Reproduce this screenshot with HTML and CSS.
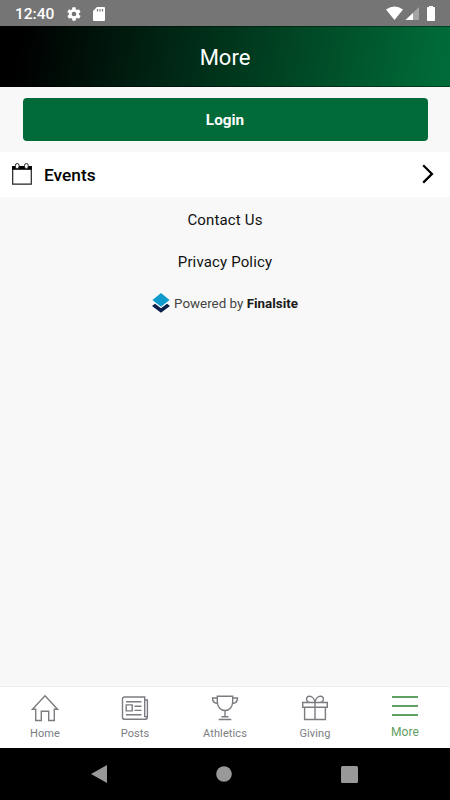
FILE: index.html
```html
<!DOCTYPE html>
<html lang="en">
<head>
    <meta charset="UTF-8">
    <meta name="viewport" content="width=device-width, initial-scale=1.0">
    <title>More</title>
    <link rel="stylesheet" href="styles.css">
</head>
<body>
    <div class="status-bar">
        <span class="clock">12:40</span>
        <svg class="gear" width="16" height="16" viewBox="0 0 24 24" fill="#fff">
            <path d="M19.4 13c0-.3.1-.6.1-1s0-.7-.1-1l2.1-1.600c.2-.2.300-.4.100-.6l-2-3.500c-.1-.2-.4-.3-.6-.2l-2.500 1c-.5-.4-1.100-.7-1.700-1l-.4-2.600c0-.3-.2-.5-.5-.5h-4c-.3 0-.5.2-.5.500l-.4 2.600c-.6.300-1.200.6-1.700 1l-2.500-1c-.2-.1-.5 0-.6.200l-2 3.500c-.1.200-.1.500.1.600L4.500 11c0 .3-.1.600-.1 1s0 .7.100 1l-2.100 1.600c-.2.200-.3.400-.1.600l2 3.500c.1.200.4.300.6.200l2.500-1c.5.4 1.100.7 1.700 1l.4 2.600c0 .3.200.5.500.5h4c.3 0 .5-.2.500-.5l.4-2.600c.6-.3 1.200-.6 1.700-1l2.500 1c.2.100.5 0 .6-.2l2-3.500c.1-.2.100-.5-.1-.6zM12 15.500a3.500 3.500 0 1 1 0-7 3.500 3.500 0 0 1 0 7z"/>
        </svg>
        <svg class="sd" width="12" height="14" viewBox="0 0 12 14">
            <path d="M4 0h7a1 1 0 0 1 1 1v12a1 1 0 0 1-1 1H1a1 1 0 0 1-1-1V4z" fill="#fff"/>
            <path d="M4.500 2v2.500M7 2v2.500M9.500 2v2.500" stroke="#757575" stroke-width="1.200"/>
        </svg>
        <svg class="signals" width="50" height="15" viewBox="0 0 50 15" fill="#fff">
            <path d="M0 3.500Q8.500 -2.500 17 3.500L8.500 14z"/>
            <path d="M33 1v13H19.500z" opacity=".35"/>
            <path d="M27 7v7h-7.500z"/>
            <path d="M43 0h4v1h1.200q.8 0 .8.800v12.400q0 .8-.8.800h-6.400q-.8 0-.8-.8V1.800q0-.8.800-.8H43z"/>
        </svg>
    </div>

    <header class="header">
        <h1>More</h1>
    </header>

    <main class="content">
        <button class="login-btn">Login</button>

        <a class="menu-row">
            <svg width="20" height="22" viewBox="0 0 20 22">
                <path d="M.7 3.500h18.600v17.700H.7z" fill="#fff" stroke="#222" stroke-width="1.200"/>
                <path d="M.2 3h19.600v3.800H.2z" fill="#000"/>
                <rect x="3.400" y=".5" width="3.600" height="5.200" rx="1.800" fill="#fff" stroke="#222" stroke-width="1"/>
                <rect x="12.600" y=".5" width="3.600" height="5.200" rx="1.800" fill="#fff" stroke="#222" stroke-width="1"/>
            </svg>
            <span>Events</span>
            <svg class="chevron" width="12" height="20" viewBox="0 0 12 20" fill="none" stroke="#000" stroke-width="2.200">
                <path d="M1.200 1.200L10 9.900 1.200 18.600"/>
            </svg>
        </a>

        <a class="link">Contact Us</a>
        <a class="link privacy">Privacy Policy</a>

        <div class="powered">
            <svg width="18" height="20" viewBox="0 0 18 20">
                <path d="M0 12.900l3-2.200 6 4.500 6-4.500 3 2.200L9 19.800z" fill="#0b1f4b"/>
                <path d="M9 0l8.600 6.900L9 13.800.4 6.900z" fill="#0f9bcb"/>
            </svg>
            <span>Powered by <b>Finalsite</b></span>
        </div>
    </main>

    <nav class="tab-bar">
        <a class="tab">
            <svg width="28" height="28" viewBox="0 0 28 28">
                <path d="M1.500 15.200L14 1.800l12.500 13.400h-3.200v11.300h-5.600v-9.300h-7.400v9.300H4.700V15.200z"/>
            </svg>
            <span>Home</span>
        </a>
        <a class="tab">
            <svg width="28" height="28" viewBox="0 0 28 28">
                <path d="M23.700 23V3H3.600Q1.500 3 1.500 5v18.200q0 2.100 2.100 2.100h20.300q2.500 0 2.500-2.100V6h-2.700M23.700 22.800h2.600M5 7.700h15.500M13.500 12.300h7M13.500 16.400h7M5 20.700h15.500M5.200 10.900h6v6h-6z"/>
            </svg>
            <span>Posts</span>
        </a>
        <a class="tab">
            <svg width="28" height="28" viewBox="0 0 28 28">
                <path d="M6.300 2.300h15.400v5.500c0 5-3 8.700-7.700 8.700S6.300 12.800 6.300 7.800zM6.300 4H1.500c0 3.500 2 5.500 5.600 5.500M21.700 4h4.800c0 3.500-2 5.500-5.600 5.500M14 16.500v6.200M10.500 22.800h7M7.700 25.500h12.600"/>
            </svg>
            <span>Athletics</span>
        </a>
        <a class="tab">
            <svg width="28" height="28" viewBox="0 0 28 28">
                <path d="M1.700 8.500h24.600v4.800H1.700zM3.600 13.300v12.200h20.800V13.300M14 8.500v17M14 8.300C12 8.500 6.700 8.600 5.800 6.500 4.700 4 6.500 2.300 8.500 2.300c3 0 5 3.200 5.500 6 .5-2.800 2.500-6 5.500-6 2 0 3.800 1.700 2.700 4.200-.9 2.100-6.200 2-8.200 1.800"/>
            </svg>
            <span>Giving</span>
        </a>
        <a class="tab active">
            <svg width="28" height="28" viewBox="0 0 28 28">
                <path d="M1 3h26M1 12h26M1 21h26"/>
            </svg>
            <span>More</span>
        </a>
    </nav>

    <div class="system-nav">
        <svg width="16" height="18" viewBox="0 0 16 18"><path d="M0 9L16 0v18z"/></svg>
        <svg width="16" height="16" viewBox="0 0 16 16"><circle cx="8" cy="8" r="7.800"/></svg>
        <svg width="17" height="17" viewBox="0 0 17 17"><rect width="17" height="17" rx="1.500"/></svg>
    </div>
</body>
</html>
```

FILE: styles.css
```css
* {
    margin: 0;
    padding: 0;
    box-sizing: border-box;
}

body {
    width: 450px;
    height: 800px;
    display: flex;
    flex-direction: column;
    font-family: Roboto, sans-serif;
    background: #f8f8f8;
    color: #111;
    overflow: hidden;
}

svg {
    display: block;
    flex-shrink: 0;
}

.status-bar {
    height: 26px;
    background: #757575;
    color: white;
    display: flex;
    align-items: center;
    padding: 1px 14px 0 15px;
}

.clock {
    width: 51px;
    font-size: 15.5px;
    font-weight: 500;
    padding-top: 1px;
}

.sd {
    margin-left: 11px;
}

.signals {
    margin-left: auto;
}

.header {
    height: 61px;
    background: linear-gradient(100deg, #000 5%, #006b38 97%);
    border-top: 1px solid rgba(0, 0, 0, 0.4);
    border-bottom: 1px solid rgba(0, 0, 0, 0.4);
    display: flex;
    align-items: center;
    justify-content: center;
}

.header h1 {
    color: white;
    font-size: 22px;
    font-weight: 400;
    padding-top: 1px;
}

.content {
    flex: 1;
    display: flex;
    flex-direction: column;
    align-items: center;
}

.login-btn {
    width: 405px;
    height: 43px;
    margin: 11px 0;
    background: #006b38;
    color: white;
    border: none;
    border-radius: 4px;
    font-family: inherit;
    font-size: 15.3px;
    font-weight: 700;
    padding-top: 1px;
}

.menu-row {
    width: 100%;
    height: 45px;
    background: white;
    color: #000;
    display: flex;
    align-items: center;
    gap: 12px;
    padding: 0 16px 1px 12px;
    font-size: 17.3px;
    font-weight: 500;
}

.menu-row span {
    padding-top: 2px;
}

.chevron {
    margin-left: auto;
}

.link {
    margin-top: 13px;
    font-size: 15px;
    line-height: 20px;
    letter-spacing: 0.15px;
}

.privacy {
    margin-top: 22px;
}

.powered {
    margin-top: 21px;
    display: flex;
    align-items: center;
    gap: 4px;
    font-size: 13.4px;
    color: #444;
}

.powered b {
    color: #1a1a1a;
}

.tab-bar {
    height: 62px;
    background: white;
    border-top: 1px solid #ededed;
    display: flex;
}

.tab {
    flex: 1;
    display: flex;
    flex-direction: column;
    align-items: center;
    padding-top: 7px;
    color: #7b7c80;
    font-size: 11px;
    letter-spacing: 0.1px;
}

.tab span {
    margin-top: 4px;
    line-height: 15px;
}

.tab svg {
    fill: none;
    stroke: currentColor;
    stroke-width: 1.4;
}

.tab.active {
    color: #5fa063;
    font-size: 12px;
}

.tab.active span {
    margin-top: 3px;
}

.tab.active svg {
    stroke-width: 2;
}

.system-nav {
    height: 52px;
    background: #000;
    display: flex;
    align-items: center;
    justify-content: space-between;
    padding: 0 92px 0 91px;
}

.system-nav svg {
    fill: #999;
}
```
